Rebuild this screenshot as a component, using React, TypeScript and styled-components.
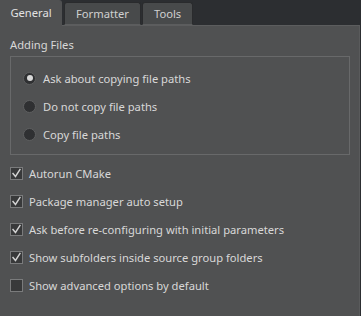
import styled, { createGlobalStyle } from 'styled-components';

const GlobalStyle = createGlobalStyle`
	html, body {
		margin: 0;
		padding: 0;
		background: #2c2e31;
	}
	body {
		font-family: 'Noto Sans', 'Open Sans', sans-serif;
		font-size: 11.2px;
		color: #d8d8d8;
	}
`;

const tabs = ['General', 'Formatter', 'Tools'];

const radios = [
	{ label: 'Ask about copying file paths', checked: true },
	{ label: 'Do not copy file paths', checked: false },
	{ label: 'Copy file paths', checked: false },
];

const checks = [
	{ label: 'Autorun CMake', checked: true },
	{ label: 'Package manager auto setup', checked: true },
	{ label: 'Ask before re-configuring with initial parameters', checked: true },
	{ label: 'Show subfolders inside source group folders', checked: true },
	{ label: 'Show advanced options by default', checked: false },
];

const CheckMark = () => (
	<svg width="11" height="11" viewBox="0 0 11 11">
		<polyline
			points="2,5.5 4.5,8.5 9,1.5"
			fill="none"
			stroke="#d4d4d4"
			strokeWidth="1.4"
			strokeLinecap="square"
		/>
	</svg>
);

export default function App() {
	return (
		<Window>
			<GlobalStyle />
			<TabBar>
				{tabs.map((t, i) => (
					<Tab key={t} $active={i === 0}>
						{t}
					</Tab>
				))}
			</TabBar>
			<Panel>
				<GroupTitle>Adding Files</GroupTitle>
				<GroupBox>
					{radios.map((r) => (
						<RadioRow key={r.label}>
							<Radio $checked={r.checked} />
							<span>{r.label}</span>
						</RadioRow>
					))}
				</GroupBox>
				<CheckList>
					{checks.map((c) => (
						<CheckRow key={c.label}>
							<Box>{c.checked && <CheckMark />}</Box>
							<span>{c.label}</span>
						</CheckRow>
					))}
				</CheckList>
			</Panel>
		</Window>
	);
}

const Window = styled.div`
	width: 361px;
	height: 316px;
	display: flex;
	flex-direction: column;
	background: #2c2e31;
	overflow: hidden;
`;

const TabBar = styled.div`
	height: 26px;
	display: flex;
	align-items: flex-end;
	gap: 1px;
	box-sizing: border-box;
	border-bottom: 1px solid #5c5d5e;
	width: 360px;
`;

const Tab = styled.div<{ $active: boolean }>`
	box-sizing: border-box;
	height: ${(p) => (p.$active ? '26px' : '23px')};
	margin-bottom: ${(p) => (p.$active ? '-1px' : '0')};
	padding: 0 11px;
	display: flex;
	align-items: center;
	justify-content: center;
	background: ${(p) => (p.$active ? '#505152' : '#484a4b')};
	border: 1px solid ${(p) => (p.$active ? '#505152' : '#2a2b2d')};
	border-bottom: ${(p) => (p.$active ? 'none' : '1px solid #5c5d5e')};
	border-radius: 0 3px 0 0;
	border-top-left-radius: ${(p) => (p.$active ? '0' : '3px')};
	color: ${(p) => (p.$active ? '#e2e2e2' : '#d0d0d0')};
	padding-bottom: ${(p) => (p.$active ? '2px' : '0')};
	&:first-child {
		width: 62px;
		margin-right: 1px;
	}
`;

const Panel = styled.div`
	flex: 1;
	width: 360px;
	box-sizing: border-box;
	background: #505152;
	border-right: 1px solid #5a5b5c;
	padding: 11px 9px 0 10px;
	display: flex;
	flex-direction: column;
`;

const GroupTitle = styled.div`
	line-height: 16px;
	margin-bottom: 3px;
`;

const GroupBox = styled.div`
	border: 1px solid #68696a;
	padding: 7px 0 6px 12px;
	display: flex;
	flex-direction: column;
`;

const RadioRow = styled.div`
	height: 28px;
	display: flex;
	align-items: center;
	gap: 7px;
`;

const Radio = styled.span<{ $checked: boolean }>`
	width: 13px;
	height: 13px;
	box-sizing: border-box;
	border-radius: 50%;
	background: #2f3032;
	border: 1px solid #5e5f60;
	display: flex;
	align-items: center;
	justify-content: center;
	&::after {
		content: '';
		display: ${(p) => (p.$checked ? 'block' : 'none')};
		width: 6px;
		height: 6px;
		border-radius: 50%;
		background: #d8d8d8;
	}
`;

const CheckList = styled.div`
	margin-top: 5px;
	display: flex;
	flex-direction: column;
`;

const CheckRow = styled.div`
	height: 27.8px;
	display: flex;
	align-items: center;
	gap: 6px;
`;

const Box = styled.span`
	width: 13px;
	height: 13px;
	box-sizing: border-box;
	background: #38393a;
	border: 1px solid #7a7b7c;
	display: flex;
	align-items: center;
	justify-content: center;
`;
